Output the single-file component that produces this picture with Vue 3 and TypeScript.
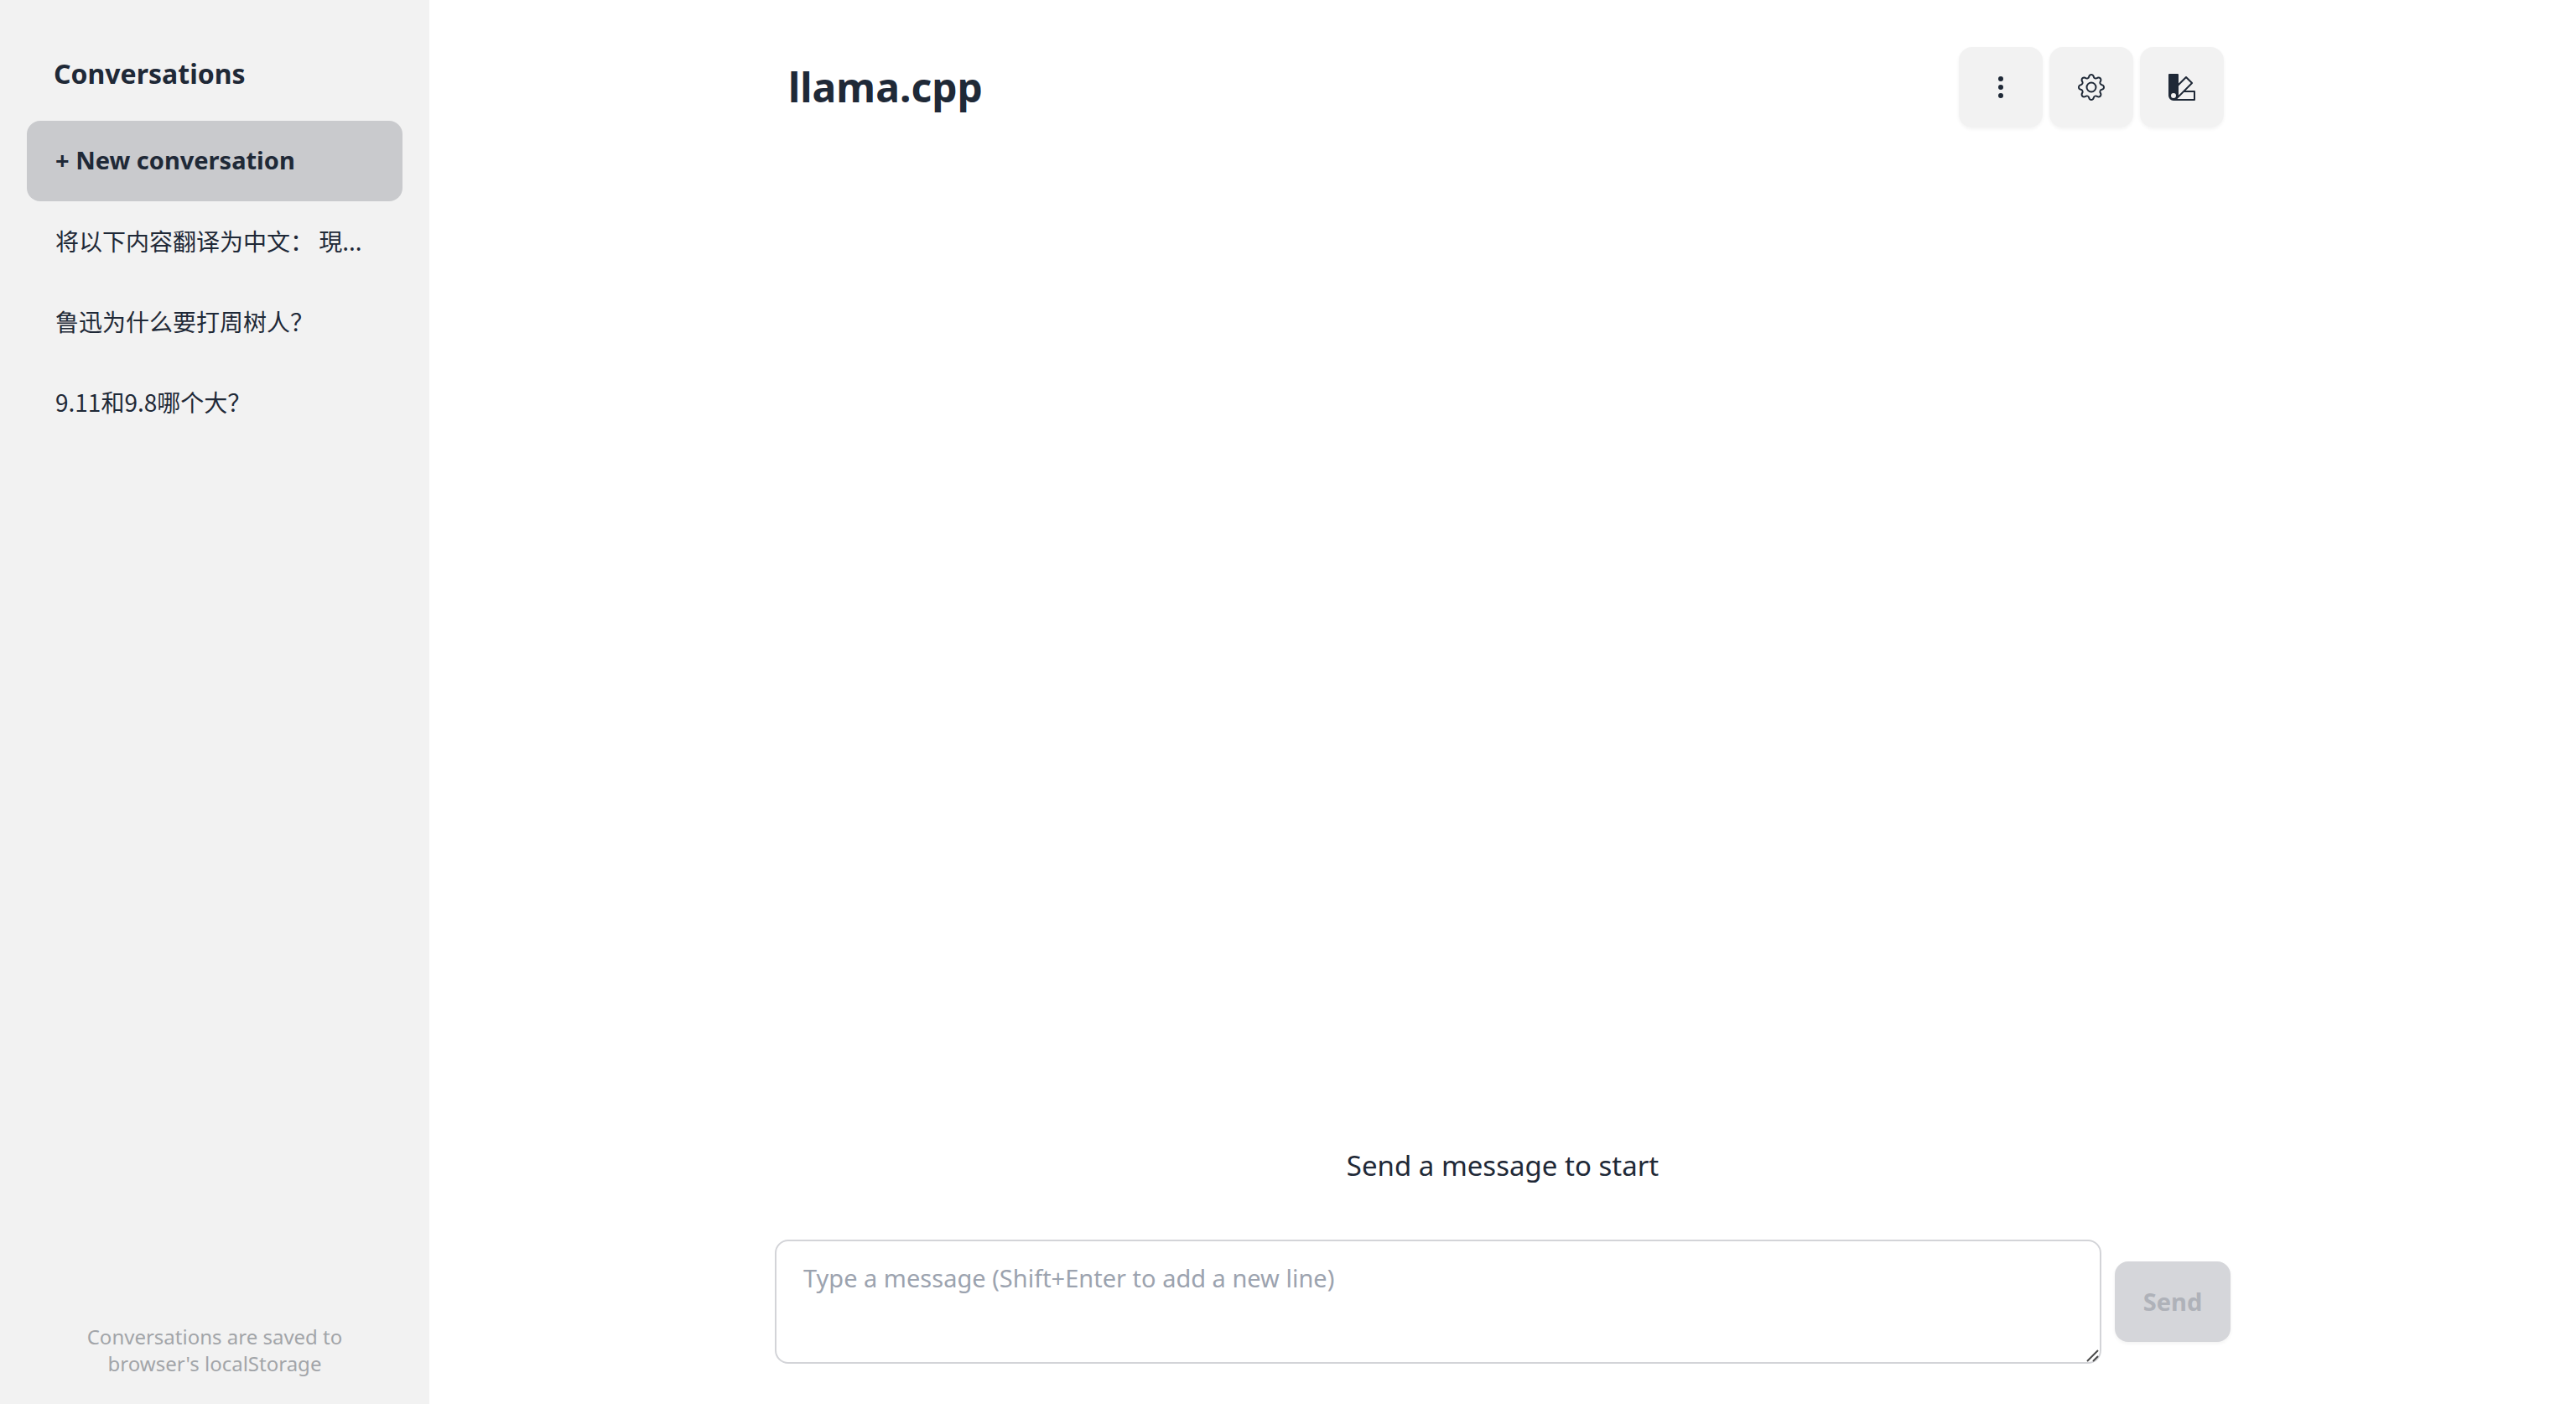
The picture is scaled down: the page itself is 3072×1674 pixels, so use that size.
<script setup lang="ts">
import { computed, ref } from 'vue'

interface Conversation {
  id: number
  title: string
}

const conversations: Conversation[] = [
  { id: 1, title: '将以下内容翻译为中文： 現...' },
  { id: 2, title: '鲁迅为什么要打周树人？' },
  { id: 3, title: '9.11和9.8哪个大？' },
]

const message = ref('')
const canSend = computed(() => message.value.trim().length > 0)
</script>

<template>
  <div class="app">
    <aside class="sidebar">
      <h2 class="sidebar-title">Conversations</h2>
      <nav class="list" aria-label="Conversations">
        <button type="button" class="item item-active">+ New conversation</button>
        <button v-for="c in conversations" :key="c.id" type="button" class="item">
          <span class="item-text" lang="zh-CN">{{ c.title }}</span>
        </button>
      </nav>
      <p class="note">Conversations are saved to browser's localStorage</p>
    </aside>

    <main class="main">
      <div class="column">
        <header class="header">
          <h1 class="title">llama.cpp</h1>
          <div class="actions">
            <button type="button" class="icon-button" aria-label="More options">
              <svg class="icon" viewBox="0 0 16 16" fill="currentColor" aria-hidden="true">
                <path d="M9.5 13a1.5 1.5 0 1 1-3 0 1.5 1.5 0 0 1 3 0m0-5a1.5 1.5 0 1 1-3 0 1.5 1.5 0 0 1 3 0m0-5a1.5 1.5 0 1 1-3 0 1.5 1.5 0 0 1 3 0" />
              </svg>
            </button>
            <button type="button" class="icon-button" aria-label="Settings">
              <svg class="icon" viewBox="0 0 16 16" fill="currentColor" aria-hidden="true">
                <path d="M8 4.754a3.246 3.246 0 1 0 0 6.492 3.246 3.246 0 0 0 0-6.492M5.754 8a2.246 2.246 0 1 1 4.492 0 2.246 2.246 0 0 1-4.492 0" />
                <path d="M9.796 1.343c-.527-1.79-3.065-1.79-3.592 0l-.094.319a.873.873 0 0 1-1.255.52l-.292-.16c-1.64-.892-3.433.902-2.54 2.541l.159.292a.873.873 0 0 1-.52 1.255l-.319.094c-1.79.527-1.79 3.065 0 3.592l.319.094a.873.873 0 0 1 .52 1.255l-.16.292c-.892 1.64.901 3.434 2.541 2.54l.292-.159a.873.873 0 0 1 1.255.52l.094.319c.527 1.79 3.065 1.79 3.592 0l.094-.319a.873.873 0 0 1 1.255-.52l.292.16c1.64.893 3.434-.902 2.54-2.541l-.159-.292a.873.873 0 0 1 .52-1.255l.319-.094c1.79-.527 1.79-3.065 0-3.592l-.319-.094a.873.873 0 0 1-.52-1.255l.16-.292c.893-1.64-.902-3.433-2.541-2.54l-.292.159a.873.873 0 0 1-1.255-.52zm-2.633.283c.246-.835 1.428-.835 1.674 0l.094.319a1.873 1.873 0 0 0 2.693 1.115l.291-.16c.764-.415 1.6.42 1.184 1.185l-.159.292a1.873 1.873 0 0 0 1.116 2.692l.318.094c.835.246.835 1.428 0 1.674l-.319.094a1.873 1.873 0 0 0-1.115 2.693l.16.291c.415.764-.42 1.6-1.185 1.184l-.291-.159a1.873 1.873 0 0 0-2.693 1.116l-.094.318c-.246.835-1.428.835-1.674 0l-.094-.319a1.873 1.873 0 0 0-2.692-1.115l-.292.16c-.764.415-1.6-.42-1.184-1.185l.159-.291A1.873 1.873 0 0 0 1.945 8.93l-.319-.094c-.835-.246-.835-1.428 0-1.674l.319-.094A1.873 1.873 0 0 0 3.06 4.377l-.16-.292c-.415-.764.42-1.6 1.185-1.184l.292.159a1.873 1.873 0 0 0 2.692-1.115z" />
              </svg>
            </button>
            <button type="button" class="icon-button" aria-label="Theme">
              <svg class="icon" viewBox="0 0 16 16" fill="currentColor" aria-hidden="true">
                <path d="M0 .5A.5.5 0 0 1 .5 0h5a.5.5 0 0 1 .5.5v5.277l4.147-4.131a.5.5 0 0 1 .707 0l3.535 3.536a.5.5 0 0 1 0 .708L10.261 10H15.5a.5.5 0 0 1 .5.5v5a.5.5 0 0 1-.5.5H3a3 3 0 0 1-2.121-.879A3 3 0 0 1 0 13.044m6-.21 7.328-7.3-2.829-2.828L6 7.188zM4.5 13a1.5 1.5 0 1 0-3 0 1.5 1.5 0 0 0 3 0M15 15v-4H9.258l-4.015 4zM0 .5v12.495z" />
              </svg>
            </button>
          </div>
        </header>

        <section class="messages">
          <p class="empty">Send a message to start</p>
        </section>

        <form class="composer" @submit.prevent>
          <div class="field">
            <textarea
              v-model="message"
              class="input"
              aria-label="Message"
              placeholder="Type a message (Shift+Enter to add a new line)"
            ></textarea>
            <svg class="grip" viewBox="0 0 16 16" fill="none" stroke="currentColor" aria-hidden="true">
              <path d="M1 15 14 2M8 15l6-6" stroke-width="2" />
            </svg>
          </div>
          <button type="submit" class="send" :disabled="!canSend">Send</button>
        </form>
      </div>
    </main>
  </div>
</template>

<style>
body {
  margin: 0;
}
</style>

<style scoped>
.app {
  display: flex;
  min-height: 100vh;
  background: #fff;
  color: #1f2937;
  font-family: "Noto Sans", "Noto Sans CJK SC", sans-serif;
}

.app,
.app * {
  box-sizing: border-box;
}

button,
textarea {
  margin: 0;
  font-family: inherit;
  color: inherit;
}

.sidebar {
  display: flex;
  flex-direction: column;
  flex: 0 0 512px;
  min-width: 0;
  padding: 32px;
  background: #f2f2f2;
}

.sidebar-title {
  margin: 0;
  padding: 32px;
  font-size: 32px;
  line-height: 48px;
  font-weight: 700;
}

.list {
  display: flex;
  flex-direction: column;
}

.item {
  display: flex;
  align-items: center;
  height: 96px;
  padding: 0 34px 2px;
  border: 0;
  border-radius: 16px;
  background: transparent;
  font-size: 28px;
  line-height: 40px;
  text-align: left;
}

.item-active {
  background: #c9cacd;
  font-size: 29px;
  font-weight: 700;
}

.item-text {
  overflow: hidden;
  text-overflow: ellipsis;
  white-space: nowrap;
  font-family: "Noto Sans CJK SC", "Noto Sans", sans-serif;
}

.note {
  margin: auto 0 0;
  padding: 0 32px;
  font-size: 24px;
  line-height: 32px;
  text-align: center;
  color: #a2a5a9;
}

.main {
  display: flex;
  justify-content: center;
  flex: 1;
  min-width: 0;
}

.column {
  display: flex;
  flex-direction: column;
  width: 100%;
  max-width: 1736px;
}

.header {
  display: flex;
  align-items: center;
  justify-content: space-between;
  padding: 56px 8px 0 16px;
}

.title {
  margin: 0;
  font-size: 48px;
  line-height: 64px;
  font-weight: 700;
}

.actions {
  display: flex;
  gap: 8px;
}

.icon-button {
  display: flex;
  align-items: center;
  justify-content: center;
  width: 100px;
  height: 96px;
  padding: 0;
  border: 0;
  border-radius: 16px;
  background: #f2f2f2;
  box-shadow: 0 2px 4px rgba(0, 0, 0, 0.05);
}

.icon {
  width: 32px;
  height: 32px;
}

.messages {
  display: flex;
  flex: 1;
  align-items: flex-end;
  justify-content: center;
}

.empty {
  margin: 0;
  padding-bottom: 64px;
  font-size: 33px;
  line-height: 48px;
}

.composer {
  display: flex;
  align-items: center;
  gap: 16px;
  padding-bottom: 48px;
}

.field {
  position: relative;
  display: flex;
  flex: 1;
}

.input {
  width: 100%;
  height: 148px;
  padding: 24px 32px;
  border: 2px solid #d3d4d8;
  border-radius: 16px;
  background: #fff;
  font-size: 29px;
  line-height: 40px;
  resize: none;
}

.input::placeholder {
  color: #9ca3af;
  opacity: 1;
}

.grip {
  position: absolute;
  right: 2px;
  bottom: 2px;
  width: 16px;
  height: 16px;
  color: #4a4a4a;
}

.send {
  width: 138px;
  height: 96px;
  padding: 0 0 2px;
  border: 0;
  border-radius: 16px;
  background: #d5d6da;
  color: #afb2b9;
  font-size: 29px;
  font-weight: 700;
  box-shadow: 0 2px 4px rgba(0, 0, 0, 0.05);
}
</style>
